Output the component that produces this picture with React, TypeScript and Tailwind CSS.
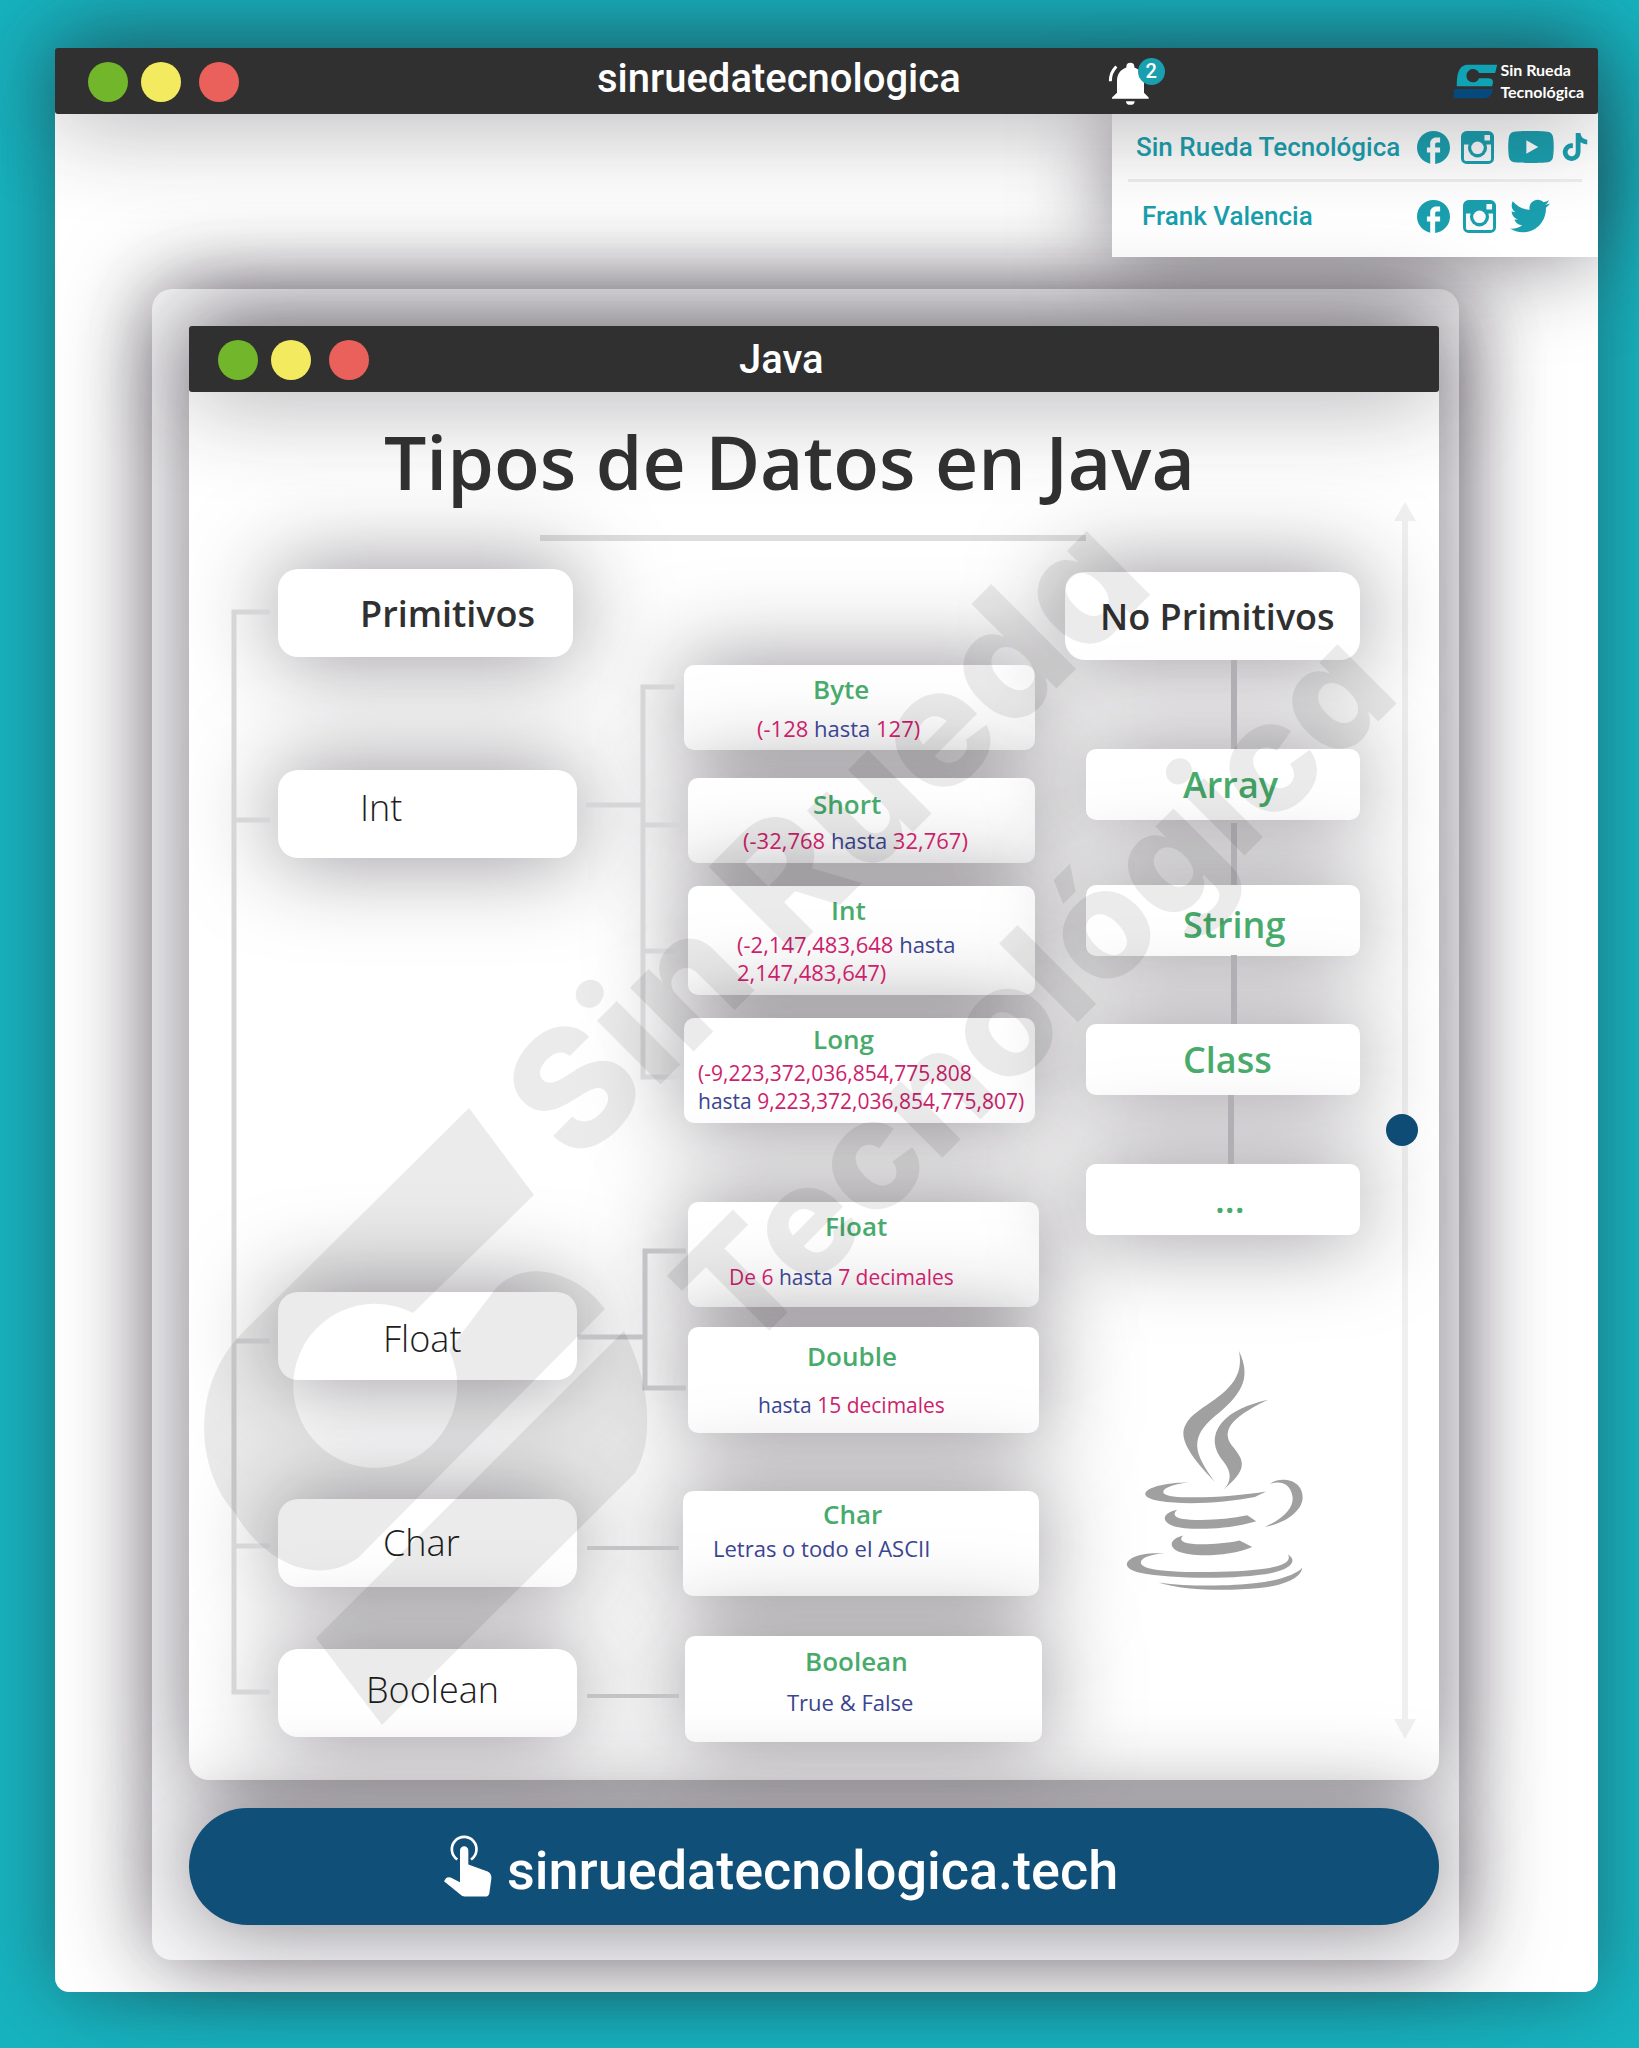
import { FaTiktok, FaTwitter, FaYoutube } from "react-icons/fa";

const BIG_SHADOW = "shadow-[0_0_90px_rgba(35,28,38,0.55)]";
const BAR_SHADOW = "shadow-[0_0_100px_rgba(35,28,38,0.45)]";
const CARD_SHADOW = "shadow-[0_0_90px_rgba(35,28,38,0.5)]";

function Facebook() {
  return (
    <svg viewBox="2 2 20 20" className="size-[33px] fill-current" aria-hidden="true">
      <path d="M22 12c0-5.52-4.48-10-10-10S2 6.480 2 12c0 4.840 3.440 8.870 8 9.800V15H8v-3h2V9.500C10 7.570 11.570 6 13.500 6H16v3h-2c-.55 0-1 .45-1 1v2h3v3h-3v6.950c5.050-.5 9-4.760 9-9.950z" />
    </svg>
  );
}

function Instagram() {
  return (
    <svg viewBox="0 0 100 100" className="size-[33px]" aria-hidden="true">
      <rect width="100" height="100" rx="17" fill="currentColor" />
      <path d="M9 41h82v42a8 8 0 0 1-8 8H17a8 8 0 0 1-8-8z" fill="#fafafb" />
      <circle cx="50" cy="51" r="29" fill="currentColor" />
      <circle cx="50" cy="51" r="19" fill="#fafafb" />
      <rect x="71" y="12" width="17" height="17" rx="2" fill="#fafafb" />
    </svg>
  );
}

function Lights() {
  return (
    <div className="flex pt-[2px]">
      <button aria-label="Abrir" className="size-10 rounded-full bg-[#72b62b]" />
      <button aria-label="Minimizar" className="ml-[13px] size-10 rounded-full bg-[#f4ea5f]" />
      <button aria-label="Cerrar" className="ml-[18px] size-10 rounded-full bg-[#ea605a]" />
    </div>
  );
}

function BrandMark() {
  return (
    <svg viewBox="46 40 134 105" className="h-[35px] w-[45px]" aria-hidden="true">
      <path
        d="M88 42H178L172 67H124A20 20 0 1 0 124 83H150Q168 83 165 98L163 107H57C57 75 60 45 88 42Z"
        fill="#0fa3b5"
      />
      <path d="M50 115H166C162 134 152 143 138 143H47Z" fill="#064a7d" />
    </svg>
  );
}

function Bell() {
  return (
    <button aria-label="Notificaciones" className="relative mt-1 block">
      <svg viewBox="24 30 126 134" className="h-[45px] w-[42px]" aria-hidden="true">
        <path
          d="M91 35a12 12 0 0 0-12 12v2C60 56 51 70 51 90v35L36 139v4h110v-4l-14-14V90c0-20-10-34-29-41v-2a12 12 0 0 0-12-12z"
          fill="#fff"
        />
        <path d="M78 150h26a13 11 0 0 1-26 0z" fill="#fff" />
        <path d="M49 46A62 62 0 0 0 31 90" fill="none" stroke="#fff" strokeWidth="9" />
      </svg>
      <span className="absolute -top-[3px] left-[30px] flex size-[27px] items-center justify-center rounded-full bg-[#1a9fae] text-xl font-medium text-white">
        2
      </span>
    </button>
  );
}

function Tap() {
  return (
    <svg viewBox="40 48 150 188" className="h-[63px] w-[50px]" aria-hidden="true">
      <path d="M83 121A37 37 0 1 1 124 121" fill="none" stroke="#fff" strokeWidth="8" />
      <path
        d="M91 94a12.500 12.500 0 0 1 25 0V136l58 21q13 7 11 22l-6 43q-2 10-12 10H105q-8 0-13-6L43 186l6-9q5-5 14-2l28 14z"
        fill="#fff"
      />
    </svg>
  );
}

function JavaCup() {
  return (
    <svg viewBox="258 212 536 724" className="h-[241px] w-[178px]" fill="#a0a0a0" role="img" aria-label="Java">
      <path d="M598 214C640 300 600 350 525 411C450 475 460 520 525 608C440 520 415 470 440 432C475 370 625 340 598 214Z" />
      <path d="M686 361C560 420 550 460 576 498C620 550 622 570 551 633C575 610 578 580 552 548C520 510 515 470 545 432C575 395 625 375 686 361Z" />
      <path d="M446 610C370 618 345 645 400 652C470 660 600 650 680 637L646 654C560 672 430 678 360 666C270 650 330 610 446 610Z" />
      <path d="M412 692C395 708 405 720 450 722C510 725 570 720 623 709L650 727C580 750 450 757 400 741C360 727 370 700 412 692Z" />
      <path d="M430 770C415 785 430 794 470 796C510 797 560 794 600 785L638 804C570 833 460 836 415 818C385 803 390 780 430 770Z" />
      <path d="M692 614C720 592 790 598 790 656C788 700 730 735 676 744C740 715 765 680 759 650C750 612 725 605 692 614Z" />
      <path d="M374 824C310 826 275 855 330 869C400 885 590 882 680 869C740 860 755 845 746 827C775 845 755 870 700 882C600 902 400 902 300 882C220 865 270 815 374 824Z" />
      <path d="M355 911C450 925 580 922 650 913C720 905 775 885 789 866C785 900 730 920 660 928C560 938 430 935 355 911Z" />
    </svg>
  );
}

const primitives = [
  { name: "Int", box: "mt-[113px] pl-[82px] pb-[12px]" },
  { name: "Float", box: "mt-[434px] pl-[105px] pt-[6px]" },
  { name: "Char", box: "mt-[119px] pl-[105px]" },
  { name: "Boolean", box: "mt-[62px] pl-[88px] pb-[6px]" },
];

type Part = [string, "n" | "w"];

const cards: { name: string; box: string; title: string; detail: string; lines: Part[][] }[] = [
  { name: "Byte", box: "ml-[1px] w-[351px] h-[85px] pt-[8px]", title: "pl-[129px]", detail: "text-[22px] mt-[9px] pl-[73px]", lines: [[["(-128 ", "n"], ["hasta ", "w"], ["127)", "n"]]] },
  { name: "Short", box: "ml-[5px] mt-[28px] w-[347px] h-[85px] pt-[10px]", title: "pl-[125px]", detail: "text-[22px] mt-[6px] pl-[55px]", lines: [[["(-32,768 ", "n"], ["hasta ", "w"], ["32,767)", "n"]]] },
  { name: "Int", box: "ml-[5px] mt-[23px] w-[347px] h-[109px] pt-[8px]", title: "pl-[143px]", detail: "text-[22px] mt-[4px] pl-[49px]", lines: [[["(-2,147,483,648 ", "n"], ["hasta", "w"]], [["2,147,483,647)", "n"]]] },
  { name: "Long", box: "ml-[1px] mt-[23px] w-[351px] h-[105px] pt-[5px]", title: "pl-[129px]", detail: "text-[21px] mt-[4px] pl-[14px]", lines: [[["(-9,223,372,036,854,775,808", "n"]], [["hasta ", "w"], ["9,223,372,036,854,775,807)", "n"]]] },
  { name: "Float", box: "ml-[5px] mt-[79px] w-[351px] h-[105px] pt-[8px]", title: "pl-[137px]", detail: "text-[21px] mt-[21px] pl-[41px]", lines: [[["De 6 ", "n"], ["hasta ", "w"], ["7 decimales", "n"]]] },
  { name: "Double", box: "ml-[5px] mt-[20px] w-[351px] h-[106px] pt-[13px]", title: "pl-[119px]", detail: "text-[21px] mt-[19px] pl-[70px]", lines: [[["hasta ", "w"], ["15 decimales", "n"]]] },
  { name: "Char", box: "mt-[58px] w-[356px] h-[105px] pt-[7px]", title: "pl-[140px]", detail: "text-[22px] mt-[4px] pl-[30px]", lines: [[["Letras o todo el ASCII", "w"]]] },
  { name: "Boolean", box: "ml-[2px] mt-[40px] w-[357px] h-[106px] pt-[9px]", title: "pl-[120px]", detail: "text-[22px] mt-[11px] pl-[102px]", lines: [[["True & False", "w"]]] },
];

const objects = [
  { name: "Array", box: "mt-[89px] pl-[97px]" },
  { name: "String", box: "mt-[65px] pl-[97px] pt-[8px]" },
  { name: "Class", box: "mt-[68px] pl-[97px]" },
  { name: "...", box: "mt-[69px] pl-[129px]" },
];

function Connectors() {
  return (
    <svg viewBox="189 392 1250 1388" className="pointer-events-none absolute inset-0 size-full" fill="none" aria-hidden="true">
      <g stroke="#d6d6d8" strokeWidth="5">
        <path d="M270 612H234V1692H270M234 820H270M234 1341H270M234 1546H270" />
        <path d="M586 805H643M675 687H643V1077H678M643 825H683M643 951H680" />
      </g>
      <g stroke="#c3c2c5" strokeWidth="5">
        <path d="M578 1337H645M686 1251H645V1388H686" />
        <path d="M587 1548H679M587 1696H679" strokeWidth="4" />
      </g>
      <path d="M1234 660V749M1234 823V885M1234 955V1024M1231 1095V1164" stroke="#b1afb3" strokeWidth="6" />
      <path d="M1405 521V1719" stroke="#000" strokeOpacity="0.06" strokeWidth="6" />
      <path d="M1394 521L1405 502L1416 521ZM1394 1719L1405 1739L1416 1719Z" fill="#000" fillOpacity="0.06" />
    </svg>
  );
}

function Watermark() {
  return (
    <svg viewBox="189 392 1250 1388" className="pointer-events-none absolute inset-0 size-full" aria-hidden="true">
      <g fill="#000" fillOpacity="0.08">
        <path d="M469 1108L243 1332C190 1385 195 1470 235 1513C262 1560 315 1588 358 1558L605 1309C582 1277 530 1254 496 1288L449 1350A82 82 0 1 1 413 1313L534 1195Z" />
        <path d="M624 1331C650 1380 655 1440 635 1473L382 1725L316 1638Z" />
        <g className="font-['Inter',sans-serif] font-extrabold [font-feature-settings:'cv11']">
          <text transform="translate(577 1168) rotate(-45)" className="text-[165px]">Sin Rueda</text>
          <text transform="translate(742 1358) rotate(-45)" className="text-[153px]">Tecnológica</text>
        </g>
      </g>
    </svg>
  );
}

export default function App() {
  return (
    <div className="min-h-screen bg-[#17b4c0] pt-12 pr-[41px] pb-14 pl-[55px] font-['Roboto',sans-serif]">
      <div className="rounded-[14px] bg-white shadow-[0_0_80px_rgba(35,28,38,0.45)]">
        <header className={`relative z-20 flex h-[66px] items-center rounded-[3px] bg-[#303030] pr-[14px] pl-[33px] ${BAR_SHADOW}`}>
          <Lights />
          <h2 className="ml-[358px] pb-1 text-[40px] leading-[44px] font-medium text-white">sinruedatecnologica</h2>
          <div className="ml-[147px]">
            <Bell />
          </div>
          <a href="#inicio" className="ml-auto flex items-center gap-[2px] font-['Lato',sans-serif] text-base leading-[22px] font-bold text-white">
            <BrandMark />
            <span>
              Sin Rueda
              <br />
              Tecnológica
            </span>
          </a>
        </header>

        <div className={`relative z-10 ml-auto w-[486px] bg-white px-4 pt-[3px] pb-[15px] text-[26px] font-medium text-[#1a9fae] ${BIG_SHADOW}`}>
          <div className="flex h-[62px] items-center pb-[2px] pl-2">
            <span className="w-[281px] shrink-0">Sin Rueda Tecnológica</span>
            <a href="#facebook" aria-label="Facebook" className="shrink-0"><Facebook /></a>
            <a href="#instagram" aria-label="Instagram" className="ml-[11px] shrink-0"><Instagram /></a>
            <a href="#youtube" aria-label="YouTube" className="ml-[13px] shrink-0"><FaYoutube className="size-12" /></a>
            <a href="#tiktok" aria-label="TikTok" className="-mr-4 ml-[6px] shrink-0"><FaTiktok className="size-7" /></a>
          </div>
          <div className="h-[3px] bg-[#eeeeef]" />
          <div className="flex h-[60px] items-center pt-[8px] pl-[14px]">
            <span className="w-[275px]">Frank Valencia</span>
            <a href="#facebook-frank" aria-label="Facebook"><Facebook /></a>
            <a href="#instagram-frank" aria-label="Instagram" className="ml-[13px]"><Instagram /></a>
            <a href="#twitter-frank" aria-label="Twitter" className="ml-[14px]"><FaTwitter className="size-10" /></a>
          </div>
        </div>

        <div className="pt-8 pr-[139px] pb-8 pl-[97px]">
          <div className={`rounded-[20px] bg-[#f8f8f9] pt-[37px] pr-5 pb-[35px] pl-[37px] ${BIG_SHADOW}`}>
            <main className={`rounded-[20px] bg-white ${BIG_SHADOW}`}>
              <header className={`relative z-10 flex h-[66px] items-center rounded-[3px] bg-[#303030] pl-[29px] ${BAR_SHADOW}`}>
                <Lights />
                <h2 className="ml-[370px] pt-[2px] text-[40px] leading-[44px] font-medium text-white">Java</h2>
              </header>

              <div className="relative mx-auto h-[1388px] w-[1250px] pt-[21px] font-['Open_Sans',sans-serif]">
                <h1 className="relative z-10 pl-[195px] text-[75px] leading-[96px] font-semibold text-[#303030]">Tipos de Datos en Java</h1>
                <div className="mt-[26px] ml-[351px] h-[6px] w-[546px] bg-[#dededf]" />

                <div className="mt-7 flex">
                  <section className="ml-[89px] w-[299px] text-4xl">
                    <h3 className={`flex h-[88px] w-[295px] items-center rounded-[20px] bg-white pt-[2px] pl-[82px] font-semibold text-[#303030] ${CARD_SHADOW}`}>
                      Primitivos
                    </h3>
                    {primitives.map((p) => (
                      <div key={p.name} className={`flex h-[88px] items-center rounded-[20px] bg-white font-light text-[#1d1d1d] ${CARD_SHADOW} ${p.box}`}>
                        {p.name}
                      </div>
                    ))}
                  </section>

                  <section className="mt-24 ml-[106px] w-[359px]">
                    {cards.map((c) => (
                      <article key={c.name} className={`rounded-[10px] bg-white ${CARD_SHADOW} ${c.box}`}>
                        <h4 className={`text-[26px] leading-8 font-semibold text-[#48ab6c] ${c.title}`}>{c.name}</h4>
                        <p className={`leading-7 whitespace-nowrap ${c.detail}`}>
                          {c.lines.map((line, i) => (
                            <span key={i} className="block whitespace-pre">
                              {line.map(([text, kind]) => (
                                <span key={text} className={kind === "n" ? "text-[#cc1f6c]" : "text-[#3b4590]"}>
                                  {text}
                                </span>
                              ))}
                            </span>
                          ))}
                        </p>
                      </article>
                    ))}
                  </section>

                  <section className="mt-[3px] ml-[23px] w-[295px] text-4xl font-semibold">
                    <h3 className={`flex h-[88px] items-center rounded-[20px] bg-white pt-[2px] pl-[35px] text-[#303030] ${CARD_SHADOW}`}>
                      No Primitivos
                    </h3>
                    {objects.map((o) => (
                      <div key={o.name} className={`ml-[21px] flex h-[71px] items-center rounded-[10px] bg-white text-[#48ab6c] ${CARD_SHADOW} ${o.box}`}>
                        {o.name}
                      </div>
                    ))}
                    <div className="mt-[115px] ml-[61px]">
                      <JavaCup />
                    </div>
                  </section>
                </div>

                <Connectors />
                <Watermark />
                <input
                  type="range"
                  aria-label="Desplazamiento"
                  defaultValue={51}
                  className="absolute top-[108px] right-[21px] h-[1236px] w-8 appearance-none bg-transparent [writing-mode:vertical-lr] [&::-webkit-slider-thumb]:size-8 [&::-webkit-slider-thumb]:appearance-none [&::-webkit-slider-thumb]:rounded-full [&::-webkit-slider-thumb]:bg-[#0f4c75]"
                />
              </div>
            </main>

            <a
              href="https://sinruedatecnologica.tech"
              className={`relative mt-7 flex h-[117px] items-center rounded-full bg-[#104f77] pl-[254px] text-[54px] font-medium text-white ${BIG_SHADOW}`}
            >
              <Tap />
              <span className="ml-[14px] pt-2">sinruedatecnologica.tech</span>
            </a>
          </div>
        </div>
      </div>
    </div>
  );
}
